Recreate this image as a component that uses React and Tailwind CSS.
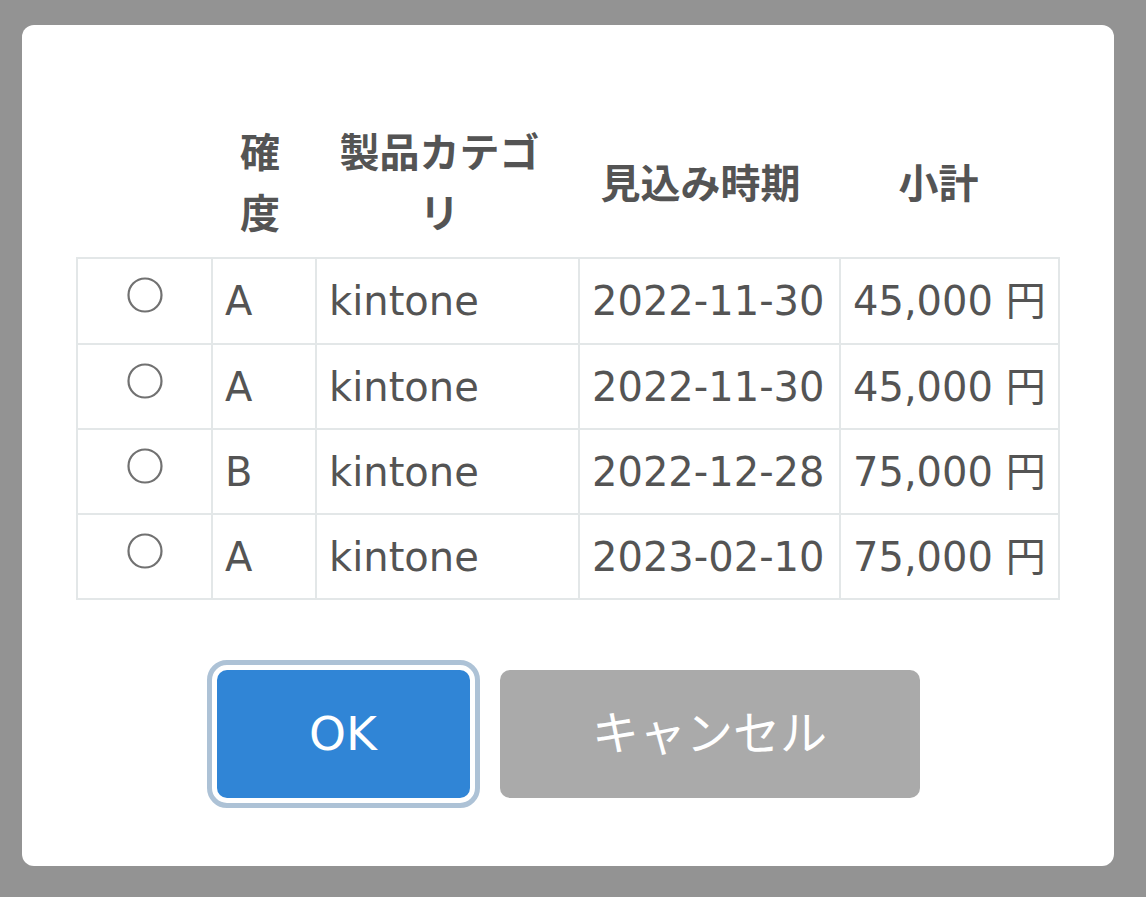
import React from "react";

const rows = [
  ["A", "kintone", "2022-11-30", "45,000 円"],
  ["A", "kintone", "2022-11-30", "45,000 円"],
  ["B", "kintone", "2022-12-28", "75,000 円"],
  ["A", "kintone", "2023-02-10", "75,000 円"],
];

const font = { fontFamily: '"DejaVu Sans", "Noto Sans CJK JP", sans-serif' };

function Radio() {
  return (
    <svg width="36" height="36" viewBox="0 0 36 36" className="block mx-auto mb-[12px]">
      <circle cx="18" cy="18" r="16.5" fill="#fff" stroke="#717171" strokeWidth="2.2" />
    </svg>
  );
}

export default function App() {
  return (
    <div
      className="w-[1146px] h-[897px] bg-[#939393] pl-[22px] pt-[25px] text-[#545454]"
      style={font}
    >
      <div className="w-[1092px] h-[841px] bg-white rounded-[12px] flex flex-col items-center pt-[95px]">
        <table className="table-fixed border-collapse w-[982px]">
          <colgroup>
            <col className="w-[135px]" />
            <col className="w-[104px]" />
            <col className="w-[263px]" />
            <col className="w-[261px]" />
            <col className="w-[219px]" />
          </colgroup>
          <thead>
            <tr className="text-[40px] font-bold leading-[61px]" style={{ fontFamily: '"Noto Sans CJK JP", sans-serif' }}>
              <th className="pb-[15px] p-0"></th>
              <th className="pb-[15px] pt-0 pl-0 pr-[8px] text-center align-middle">確<br />度</th>
              <th className="pb-[15px] pt-0 pl-0 pr-[16px] text-center align-middle">製品カテゴ<br />リ</th>
              <th className="pb-[15px] pt-0 pl-0 pr-[18px] text-center align-middle">見込み時期</th>
              <th className="pb-[15px] pt-0 pl-0 pr-[22px] text-center align-middle">小計</th>
            </tr>
          </thead>
          <tbody className="text-[40px] leading-[48px]">
            {rows.map((r, i) => (
              <tr key={i} className={i === 0 ? "h-[86px]" : "h-[85px]"}>
                <td className="border-2 border-[#e3e7e8] align-middle">
                  <Radio />
                </td>
                {r.map((c, j) => (
                  <td
                    key={j}
                    className="border-2 border-[#e3e7e8] px-[12px] align-middle text-left whitespace-nowrap"
                  >
                    {c}
                  </td>
                ))}
              </tr>
            ))}
          </tbody>
        </table>
        <div className="flex gap-[30px] mt-[70px]">
          <button className="w-[253px] h-[128px] rounded-[10px] bg-[#3085d6] text-white text-[47px] outline-[5px] outline-solid outline-[#adc2d6] outline-offset-[5px]">
            OK
          </button>
          <button className="w-[420px] h-[128px] rounded-[10px] bg-[#aaaaaa] text-white text-[47px]">
            キャンセル
          </button>
        </div>
      </div>
    </div>
  );
}
